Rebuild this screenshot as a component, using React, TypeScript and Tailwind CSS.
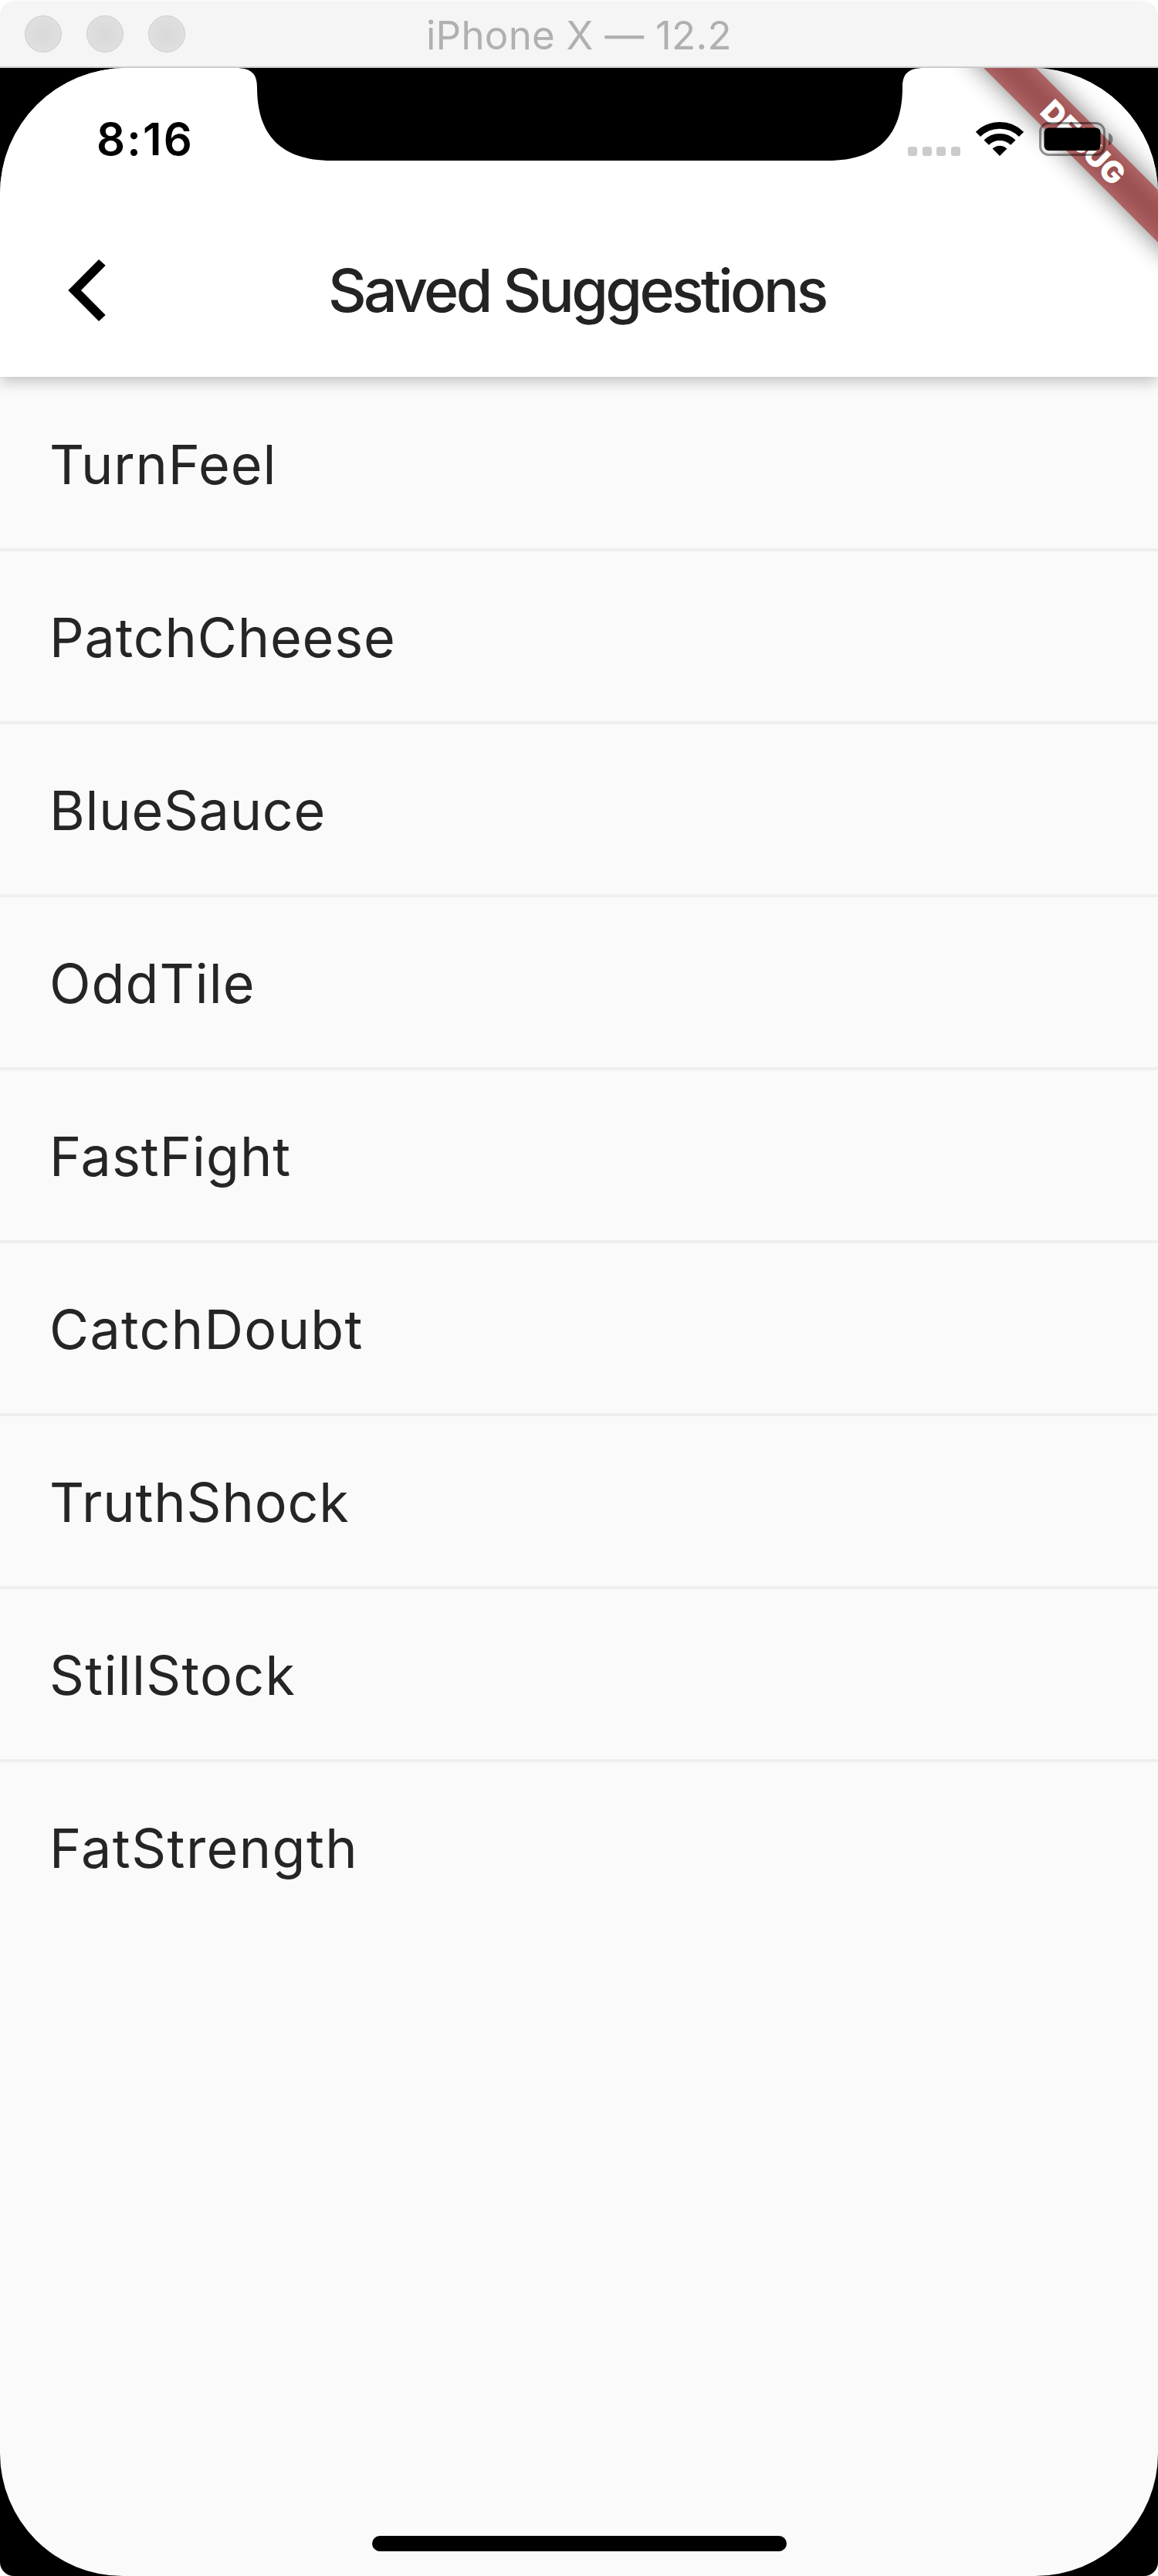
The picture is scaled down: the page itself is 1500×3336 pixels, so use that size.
import React from "react";

const suggestions = [
  { name: "TurnFeel", tracking: "tracking-[0.86px]" },
  { name: "PatchCheese", tracking: "tracking-[0.83px]" },
  { name: "BlueSauce", tracking: "tracking-[0.75px]" },
  { name: "OddTile", tracking: "tracking-[1.05px]" },
  { name: "FastFight", tracking: "tracking-[1px]" },
  { name: "CatchDoubt", tracking: "tracking-[1.3px]" },
  { name: "TruthShock", tracking: "tracking-[0.87px]" },
  { name: "StillStock", tracking: "tracking-[1.3px]" },
  { name: "FatStrength", tracking: "tracking-[1.45px]" },
];

function WindowButton() {
  return (
    <div className="size-12 rounded-full border-[1.5px] border-[#cecece] bg-[radial-gradient(circle,#d9d9d9_0%,#dfdfdf_70%)]" />
  );
}

function TitleBar() {
  return (
    <div className="flex h-[88px] items-center rounded-t-[20px] border-t-2 border-b-2 border-t-[#fafafa] border-b-[#cccccc] bg-[#f5f5f5] pl-8">
      <div className="flex gap-8">
        <WindowButton />
        <WindowButton />
        <WindowButton />
      </div>
      <div className="ml-[312px] pt-[3px] text-[51px] leading-none tracking-[0.25px] whitespace-nowrap text-[#b0b0b0]">
        iPhone X — 12.2
      </div>
    </div>
  );
}

function Notch() {
  return (
    <svg className="absolute top-0 left-[300px] z-20" width="902" height="120" viewBox="0 0 902 120">
      <path d="M5 0C26 0 33 8 33 25C33 85 62 120 130 120H772C840 120 869 85 869 25C869 8 876 0 897 0Z" fill="#000" />
    </svg>
  );
}

function DebugBanner() {
  return (
    <div className="absolute top-[72px] left-[1204px] h-12 w-[400px] rotate-45">
      <div className="absolute inset-0 bg-black/50 blur-[16px]" />
      <div className="relative flex h-12 items-center justify-center bg-[#a5302f]/63 text-[39px] leading-none font-black text-white">
        DEBUG
      </div>
    </div>
  );
}

function WifiIcon() {
  return (
    <svg width="62" height="45" viewBox="0 0 62 45">
      <path d="M2.93 16.93A39.7 39.7 0 0 1 59.07 16.93" fill="none" stroke="#000" strokeWidth="8.8" />
      <path d="M13.68 27.68A24.5 24.5 0 0 1 48.32 27.68" fill="none" stroke="#000" strokeWidth="9" />
      <path d="M31 45L21.6 35.6A13.3 13.3 0 0 1 40.4 35.6Z" fill="#000" />
    </svg>
  );
}

function BatteryIcon() {
  return (
    <svg width="96" height="44" viewBox="0 0 96 44">
      <rect x="1.5" y="1.5" width="83" height="41" rx="11" fill="none" stroke="#000" strokeOpacity="0.42" strokeWidth="3" />
      <rect x="6.5" y="7.5" width="73" height="29.5" rx="6" fill="#000" />
      <path d="M90 14C93.5 15.5 95.5 18.5 95.5 22.2C95.5 26 93.5 29 90 30.5Z" fill="#000" fillOpacity="0.42" />
    </svg>
  );
}

function StatusBar() {
  return (
    <div className="relative z-10 flex h-[176px] pl-[125px]">
      <div className="flex w-[1051px] items-center pt-2 text-[58px] leading-none font-semibold tracking-[2.2px] text-black">
        8:16
      </div>
      <div className="flex h-[114px] items-end">
        <div className="flex gap-[6.7px]">
          <div className="size-3 rounded-[3px] bg-[#cbcbcb]" />
          <div className="size-3 rounded-[3px] bg-[#cbcbcb]" />
          <div className="size-3 rounded-[3px] bg-[#cbcbcb]" />
          <div className="size-3 rounded-[3px] bg-[#cbcbcb]" />
        </div>
        <div className="ml-5">
          <WifiIcon />
        </div>
        <div className="ml-5">
          <BatteryIcon />
        </div>
      </div>
    </div>
  );
}

function NavBar() {
  return (
    <div className="flex h-[224px] items-center pl-[88px]">
      <svg width="49" height="80" viewBox="0 0 49 80">
        <path d="M40 0L48.7 7.7L17 40L48.7 72L40 80L0.3 40Z" fill="#000" />
      </svg>
      <h1 className="ml-[288px] text-[77px] leading-none font-medium tracking-[-3.65px] whitespace-nowrap text-[#232323]">
        Saved Suggestions
      </h1>
    </div>
  );
}

export default function App() {
  return (
    <div className="h-[3336px] w-[1500px] bg-white font-['Inter',sans-serif]">
      <TitleBar />
      <div className="h-[3248px] rounded-b-[18px] bg-black">
        <div className="relative h-[3248px] overflow-hidden rounded-t-[163px] rounded-b-[159px] bg-[#fafafa]">
          <Notch />
          <header className="relative bg-white shadow-[0_6px_18px_rgba(0,0,0,0.23)]">
            <StatusBar />
            <NavBar />
          </header>
          <div className="absolute inset-0 h-[400px]">
            <DebugBanner />
          </div>
          <ul>
            {suggestions.map((s, i) => (
              <li key={s.name}>
                {i > 0 && <div className="-my-0.5 h-1 bg-[#efefef]" />}
                <div className="flex h-[224px] items-center pt-[3px] pl-16">
                  <span className={`text-[70px] leading-none text-[#252525] ${s.tracking}`}>{s.name}</span>
                </div>
              </li>
            ))}
          </ul>
          <div className="absolute bottom-8 left-[482px] h-5 w-[537px] rounded-full bg-black" />
        </div>
      </div>
    </div>
  );
}
